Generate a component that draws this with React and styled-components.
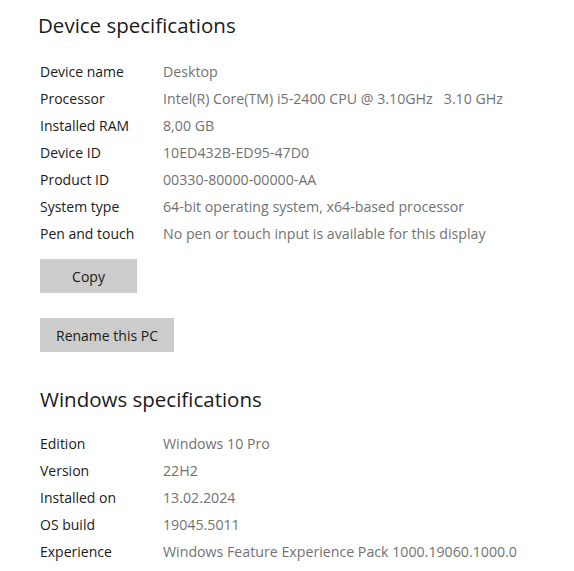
import React from 'react'
import styled, { createGlobalStyle } from 'styled-components'

const GlobalStyle = createGlobalStyle`
  html, body {
    margin: 0;
    padding: 0;
    background: #ffffff;
  }
  body {
    font-family: "Open Sans", "Noto Sans", sans-serif;
    color: #1b1b1b;
  }
`

const device = [
  ['Device name', 'Desktop'],
  ['Processor', 'Intel(R) Core(TM) i5-2400 CPU @ 3.10GHz   3.10 GHz'],
  ['Installed RAM', '8,00 GB'],
  ['Device ID', '10ED432B-ED95-47D0'],
  ['Product ID', '00330-80000-00000-AA'],
  ['System type', '64-bit operating system, x64-based processor'],
  ['Pen and touch', 'No pen or touch input is available for this display'],
]

const windows = [
  ['Edition', 'Windows 10 Pro'],
  ['Version', '22H2'],
  ['Installed on', '13.02.2024'],
  ['OS build', '19045.5011'],
  ['Experience', 'Windows Feature Experience Pack 1000.19060.1000.0'],
]

export default function App() {
  return (
    <Page>
      <GlobalStyle />
      <Heading>Device specifications</Heading>
      <SpecList>
        {device.map(([k, v]) => (
          <Row key={k}>
            <Label>{k}</Label>
            <Value>{v}</Value>
          </Row>
        ))}
      </SpecList>
      <Actions>
        <Button $width={97}>Copy</Button>
        <Button $width={134}>Rename this PC</Button>
      </Actions>
      <Heading $second>Windows specifications</Heading>
      <SpecList $tight>
        {windows.map(([k, v]) => (
          <Row key={k}>
            <Label>{k}</Label>
            <Value>{v}</Value>
          </Row>
        ))}
      </SpecList>
    </Page>
  )
}

const Page = styled.div`
  width: 574px;
  height: 571px;
  overflow: hidden;
  padding: 10px 0 0 40px;
  box-sizing: border-box;
`

const Heading = styled.h2`
  margin: ${p => (p.$second ? '32px 0 0 0' : '0 0 0 -2px')};
  font-size: 20.5px;
  font-weight: 400;
  line-height: 30px;
  color: #1a1a1a;
`

const SpecList = styled.div`
  display: flex;
  flex-direction: column;
  margin-top: ${p => (p.$tight ? 16 : 18)}px;
`

const Row = styled.div`
  display: grid;
  grid-template-columns: 123px 1fr;
  height: 27px;
  align-items: center;
  font-size: 14px;
  white-space: pre;
`

const Label = styled.span`
  color: #1a1a1a;
`

const Value = styled.span`
  color: #727272;
  font-size: 14.2px;
`

const Actions = styled.div`
  display: flex;
  flex-direction: column;
  align-items: flex-start;
  gap: 25px;
  margin-top: 12px;
`

const Button = styled.button`
  width: ${p => p.$width}px;
  height: 34px;
  border: none;
  background: #cccccc;
  font-family: inherit;
  font-size: 14px;
  color: #1a1a1a;
  padding: 0;
`
